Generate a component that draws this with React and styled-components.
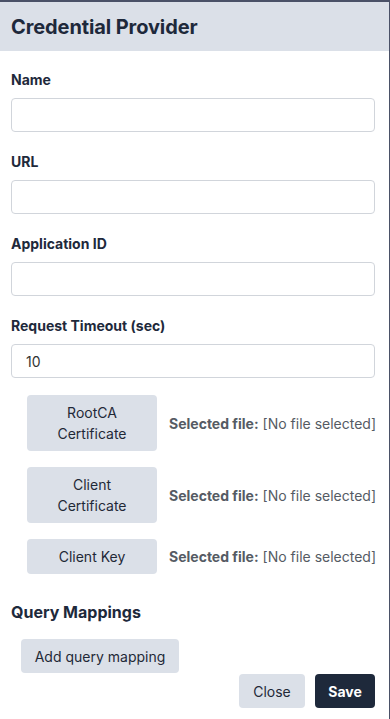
import React from "react";
import styled, { createGlobalStyle } from "styled-components";

const GlobalStyle = createGlobalStyle`
  html, body {
    margin: 0;
    padding: 0;
    background: #ffffff;
    font-family: Inter, "Noto Sans", sans-serif;
  }
  * {
    box-sizing: border-box;
  }
`;

const Modal = styled.div`
  width: 390px;
  height: 719px;
  border-top: 2px solid #4a5167;
  border-right: 1px solid #4a5167;
  background: #ffffff;
  display: flex;
  flex-direction: column;
  overflow: hidden;
`;

const Header = styled.div`
  height: 49px;
  background: #dbe0e8;
  display: flex;
  align-items: center;
  padding-left: 11px;
`;

const Title = styled.h2`
  margin: 0;
  font-size: 20px;
  font-weight: 700;
  color: #1e293b;
  letter-spacing: -0.1px;
`;

const Body = styled.div`
  padding: 19px 14px 0 11px;
  display: flex;
  flex-direction: column;
`;

const Field = styled.div`
  display: flex;
  flex-direction: column;
  gap: 8px;
  margin-bottom: 20px;
`;

const Label = styled.label`
  font-size: 14px;
  line-height: 20px;
  font-weight: 700;
  color: #1e293b;
`;

const Input = styled.input`
  height: 34px;
  width: 100%;
  border: 1px solid #d1d5db;
  border-radius: 4px;
  padding: 0 14px;
  font-family: Inter, sans-serif;
  font-size: 14px;
  color: #333333;
  outline: none;
`;

const FileList = styled.div`
  display: flex;
  flex-direction: column;
  gap: 16px;
  padding-left: 16px;
  margin-top: -3px;
`;

const FileRow = styled.div`
  display: flex;
  align-items: center;
  gap: 12px;
`;

const GreyButton = styled.button`
  flex-shrink: 0;
  background: #dbe0e8;
  border: none;
  border-radius: 4px;
  font-family: Inter, sans-serif;
  font-size: 14px;
  line-height: 21px;
  color: #1f2937;
  padding: ${(p) => (p.$file ? "7px 10px" : "7px 10px 6px")};
  width: ${(p) => (p.$width ? p.$width + "px" : "auto")};
  min-height: 34px;
  text-align: center;
  cursor: pointer;
`;

const FileInfo = styled.div`
  font-size: 14px;
  color: #555b64;
  white-space: nowrap;
`;

const Strong = styled.span`
  font-weight: 700;
`;

const SectionTitle = styled.h3`
  margin: 26px 0 15px;
  font-size: 16px;
  line-height: 24px;
  font-weight: 700;
  color: #1e293b;
`;

const AddWrap = styled.div`
  padding-left: 10px;
  margin-bottom: 1px;
`;

const Footer = styled.div`
  display: flex;
  justify-content: flex-end;
  gap: 10px;
`;

const SaveButton = styled.button`
  background: #1e293b;
  color: #ffffff;
  border: none;
  border-radius: 4px;
  font-family: Inter, sans-serif;
  font-size: 14px;
  font-weight: 700;
  height: 34px;
  width: 60px;
  cursor: pointer;
`;

const fields = ["Name", "URL", "Application ID", "Request Timeout (sec)"];

const files = [
  { label: ["RootCA", "Certificate"] },
  { label: ["Client", "Certificate"] },
  { label: ["Client Key"] },
];

export default function App() {
  return (
    <>
      <GlobalStyle />
      <Modal>
        <Header>
          <Title>Credential Provider</Title>
        </Header>
        <Body>
          {fields.map((f) => (
            <Field key={f}>
              <Label>{f}</Label>
              <Input defaultValue={f === "Request Timeout (sec)" ? "10" : ""} />
            </Field>
          ))}
          <FileList>
            {files.map((file) => (
              <FileRow key={file.label.join(" ")}>
                <GreyButton $width={130} $file>
                  {file.label.map((line, i) => (
                    <React.Fragment key={line}>
                      {i > 0 && <br />}
                      {line}
                    </React.Fragment>
                  ))}
                </GreyButton>
                <FileInfo>
                  <Strong>Selected file:</Strong> [No file selected]
                </FileInfo>
              </FileRow>
            ))}
          </FileList>
          <SectionTitle>Query Mappings</SectionTitle>
          <AddWrap>
            <GreyButton $width={158}>Add query mapping</GreyButton>
          </AddWrap>
          <Footer>
            <GreyButton $width={66}>Close</GreyButton>
            <SaveButton>Save</SaveButton>
          </Footer>
        </Body>
      </Modal>
    </>
  );
}
